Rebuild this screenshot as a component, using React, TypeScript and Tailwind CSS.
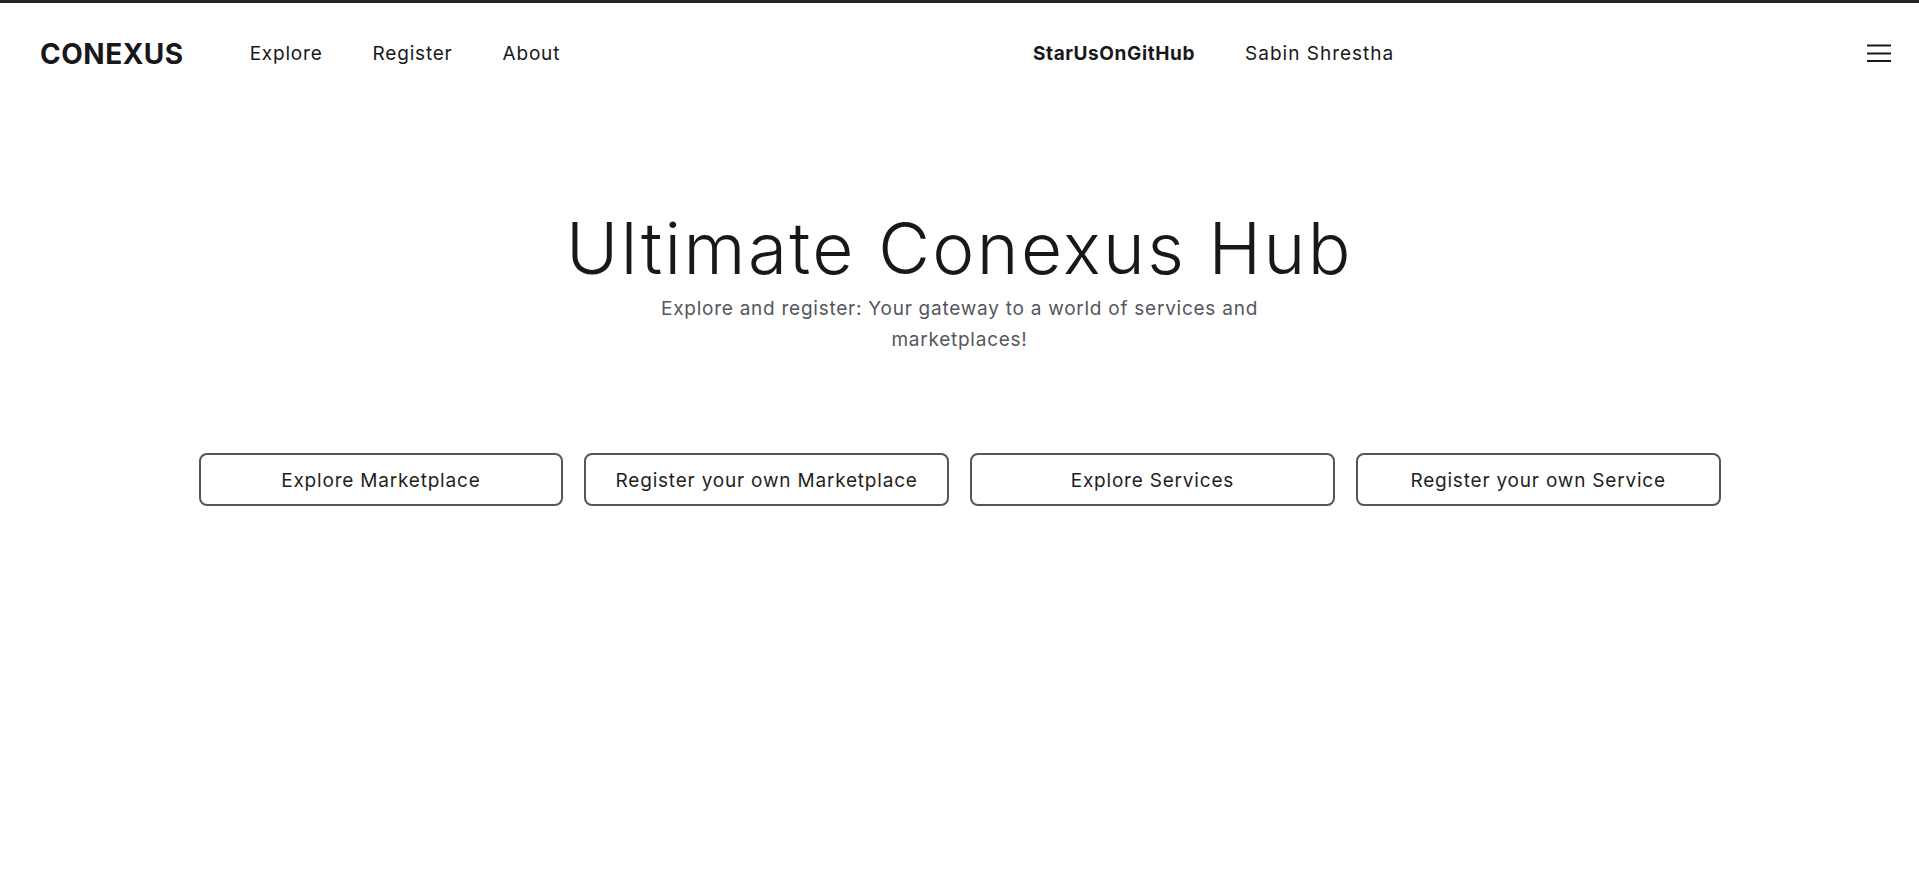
export default function App() {
  const buttons = [
    "Explore Marketplace",
    "Register your own Marketplace",
    "Explore Services",
    "Register your own Service",
  ];

  return (
    <div className="min-h-screen bg-white border-t-[3px] border-[#242424] font-['Inter',sans-serif] text-[#18181b]">
      <nav className="h-[102px] flex items-center justify-between pl-10 pr-7">
        <div className="flex items-center">
          <a href="#" className="text-[28px] font-bold tracking-[0.5px] mr-[66px]">CONEXUS</a>
          <div className="flex items-center gap-[50px] text-[19px] tracking-[0.8px]">
            <a href="#">Explore</a>
            <a href="#">Register</a>
            <a href="#">About</a>
          </div>
        </div>
        <div className="flex items-center gap-[50px] text-[19px] tracking-[0.6px]">
          <a href="#" className="font-bold">StarUsOnGitHub</a>
          <a href="#" className="tracking-[1px]">Sabin Shrestha</a>
        </div>
        <button className="mb-[3px]">
          <svg width="24" height="18" viewBox="0 0 24 18">
            <path d="M0 1.5h24M0 9.5h24M0 17h24" stroke="#18181b" strokeWidth="2.2" />
          </svg>
        </button>
      </nav>

      <main className="flex flex-col items-center">
        <h1 className="mt-[108px] text-[71px] leading-none font-light tracking-[2.4px]">Ultimate Conexus Hub</h1>
        <p className="mt-[9px] w-[680px] text-center text-[19px] leading-[31px] tracking-[0.75px] text-[#55565e]">
          Explore and register: Your gateway to a world of services and marketplaces!
        </p>

        <div className="mt-[98px] w-[1522px] grid grid-cols-4 gap-[21px]">
          {buttons.map((b) => (
            <button
              key={b}
              className="h-[53px] pt-[3px] rounded-lg border-2 border-[#55555f] text-[19px] tracking-[0.8px] text-[#1f1f23]"
            >
              {b}
            </button>
          ))}
        </div>
      </main>
    </div>
  );
}
